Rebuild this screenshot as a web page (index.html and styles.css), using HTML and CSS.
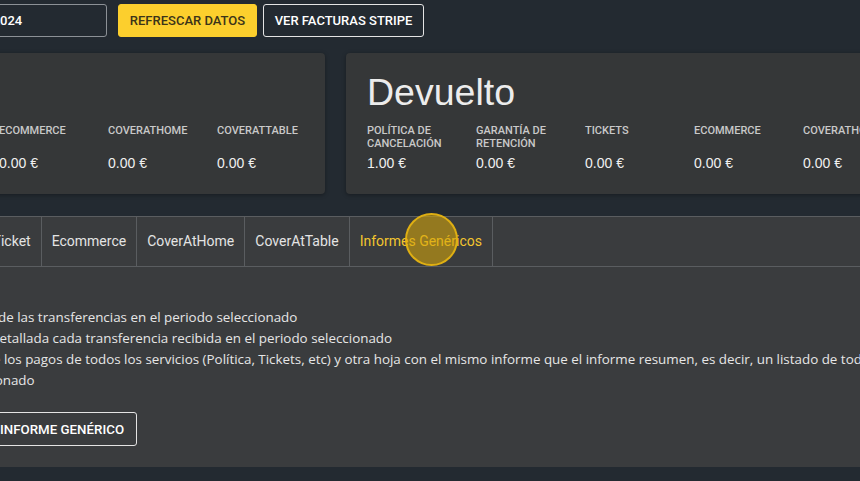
FILE: index.html
```html
<!DOCTYPE html>
<html lang="es">
<head>
<meta charset="utf-8">
<title>Informes</title>
<link rel="stylesheet" href="styles.css">
</head>
<body>
<div class="page">
  <div class="toolbar">
    <input class="date-input" value="01/01/2024">
    <input class="date-input" value="31/12/2024">
    <button class="btn btn-yellow">Refrescar datos</button>
    <button class="btn btn-outline">Ver facturas Stripe</button>
  </div>

  <div class="cards">
    <section class="card">
      <h2 class="card-title">Cobrado</h2>
      <div class="stats">
        <div class="stat"><div class="stat-label">Política de cancelación</div><div class="stat-value">0.00 €</div></div>
        <div class="stat"><div class="stat-label">Garantía de retención</div><div class="stat-value">0.00 €</div></div>
        <div class="stat"><div class="stat-label">Tickets</div><div class="stat-value">0.00 €</div></div>
        <div class="stat"><div class="stat-label">Ecommerce</div><div class="stat-value">0.00 €</div></div>
        <div class="stat"><div class="stat-label">CoverAtHome</div><div class="stat-value">0.00 €</div></div>
        <div class="stat"><div class="stat-label">CoverAtTable</div><div class="stat-value">0.00 €</div></div>
      </div>
    </section>
    <section class="card">
      <h2 class="card-title">Devuelto</h2>
      <div class="stats">
        <div class="stat"><div class="stat-label">Política de cancelación</div><div class="stat-value">1.00 €</div></div>
        <div class="stat"><div class="stat-label">Garantía de retención</div><div class="stat-value">0.00 €</div></div>
        <div class="stat"><div class="stat-label">Tickets</div><div class="stat-value">0.00 €</div></div>
        <div class="stat"><div class="stat-label">Ecommerce</div><div class="stat-value">0.00 €</div></div>
        <div class="stat"><div class="stat-label">CoverAtHome</div><div class="stat-value">0.00 €</div></div>
        <div class="stat"><div class="stat-label">CoverAtTable</div><div class="stat-value">0.00 €</div></div>
      </div>
    </section>
  </div>

  <div class="panel">
    <nav class="tabs">
      <span class="tab">Resumen</span>
      <span class="tab">Política</span>
      <span class="tab">Garantía</span>
      <span class="tab">Ticket</span>
      <span class="tab">Ecommerce</span>
      <span class="tab">CoverAtHome</span>
      <span class="tab">CoverAtTable</span>
      <span class="tab active">Informes Genéricos<span class="cursor-dot"></span></span>
    </nav>
    <div class="panel-body">
      <p class="desc">Resumen de las transferencias en el periodo seleccionado</p>
      <p class="desc">Muestra detallada cada transferencia recibida en el periodo seleccionado</p>
      <p class="desc">Listado de los pagos de todos los servicios (Política, Tickets, etc) y otra hoja con el mismo informe que el informe resumen, es decir, un listado de todas las transferencias en el periodo</p>
      <p class="desc">ya seleccionado</p>
      <button class="btn btn-outline btn-report">Crear informe genérico</button>
    </div>
  </div>
</div>
</body>
</html>
```
FILE: styles.css
```css
html, body {
  margin: 0;
  padding: 0;
}
body {
  background: #232a31;
  font-family: Roboto, "Liberation Sans", sans-serif;
  overflow: hidden;
  height: 481px;
}
.page {
  margin-left: -349px;
  width: 1369px;
  padding-top: 4px;
}
.toolbar {
  display: flex;
  align-items: center;
  padding-left: 111px;
}
.date-input {
  box-sizing: border-box;
  width: 167px;
  height: 33px;
  margin-right: 11px;
  padding: 0 12px;
  border: 1px solid #8c9196;
  border-radius: 3px;
  background: transparent;
  color: #ffffff;
  font: 500 13px Roboto, sans-serif;
  outline: none;
}
.btn {
  box-sizing: border-box;
  height: 33px;
  padding: 0;
  border-radius: 3px;
  font: 500 13px Roboto, sans-serif;
  text-transform: uppercase;
  white-space: nowrap;
  cursor: pointer;
}
.btn-yellow {
  width: 139px;
  margin-right: 6px;
  background: #fccf2d;
  border: 1px solid #fccf2d;
  color: #3b3419;
}
.btn-outline {
  width: 161px;
  background: transparent;
  border: 1px solid #e4e4e4;
  color: #ffffff;
}
.cards {
  display: flex;
  gap: 21px;
  margin-top: 16px;
}
.card {
  box-sizing: border-box;
  width: 674px;
  flex: none;
  padding: 14px 0 21px 21px;
  background: #353738;
  border-radius: 4px;
  box-shadow: 0 1px 4px rgba(0, 0, 0, 0.35);
}
.card-title {
  margin: 0 0 7px;
  font: 400 37.5px/50px "Liberation Sans", Arial, sans-serif;
  color: #ececec;
}
.stats {
  display: grid;
  grid-template-columns: repeat(6, 109px);
}
.stat-label {
  min-height: 26px;
  padding-right: 10px;
  font: 500 11px/13px Roboto, sans-serif;
  text-transform: uppercase;
  color: #c9c9c9;
}
.stat-value {
  margin-top: 3px;
  font: 400 14px/20px "Liberation Sans", Arial, sans-serif;
  color: #f0f0f0;
}
.panel {
  margin-top: 22px;
  background: #3a3c3e;
  border-top: 1px solid #5a5d60;
}
.tabs {
  display: flex;
  border-bottom: 1px solid #5a5d60;
  padding-left: 111px;
}
.tab {
  position: relative;
  height: 49px;
  padding: 0 10px;
  font: 400 14px/48px Roboto, sans-serif;
  color: #e4e4e4;
  border-right: 1px solid #5a5d60;
  white-space: nowrap;
}
.tab.active {
  color: #f2c52e;
}
.cursor-dot {
  position: absolute;
  left: 55px;
  top: -4px;
  width: 49px;
  height: 49px;
  border-radius: 50%;
  background: rgba(214, 166, 8, 0.58);
  border: 2px solid rgba(232, 182, 18, 0.9);
}
.panel-body {
  padding: 40px 0 21px 285px;
}
.desc {
  margin: 0;
  font: 400 13.4px/21px "Open Sans", sans-serif;
  color: #e6e6e6;
  white-space: nowrap;
}
.btn-report {
  width: auto;
  height: 34px;
  margin-top: 21px;
  padding: 0 12px 0 18px;
  font-size: 13.3px;
}
```
